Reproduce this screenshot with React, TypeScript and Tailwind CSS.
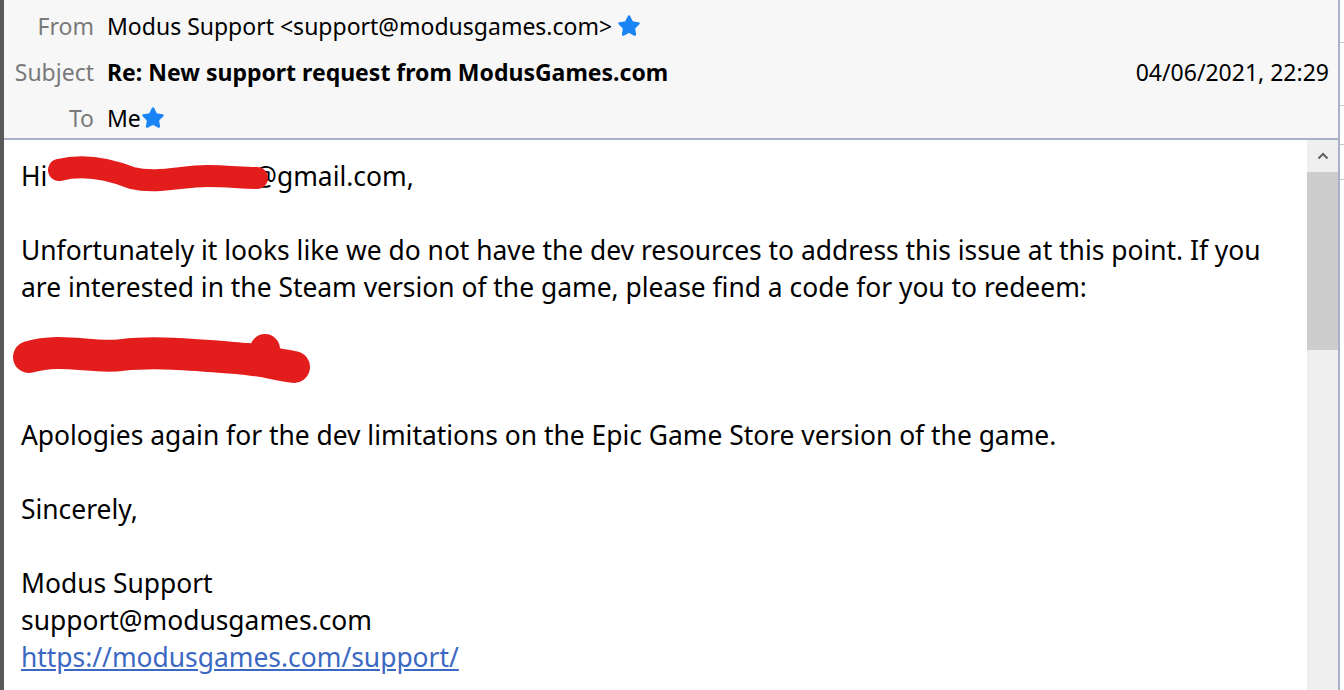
import { Star } from "lucide-react";

const font = { fontFamily: '"Noto Sans", "Open Sans", sans-serif' };

function BlueStar() {
  return <Star size={24} className="shrink-0 text-[#1b84f5]" fill="#1b84f5" strokeWidth={1.5} />;
}

function HeaderRow({ label, children }: { label: string; children: React.ReactNode }) {
  return (
    <div className="flex items-center h-[46px]">
      <div className="w-[90px] text-right text-[#7a7a7a]">{label}</div>
      <div className="flex-1 flex items-center pl-[13px] text-black">{children}</div>
    </div>
  );
}

function Scrollbar() {
  return (
    <div className="w-[31px] flex flex-col bg-[#efefef]">
      <div className="h-[32px] flex items-center justify-center">
        <svg width="12" height="8" viewBox="0 0 12 8">
          <path d="M1.5 6.5 L6 2 L10.5 6.5" stroke="#5f5f5f" strokeWidth="2" fill="none" />
        </svg>
      </div>
      <div className="h-[178px] bg-[#cdcdcd]" />
      <div className="flex-1" />
    </div>
  );
}

export default function App() {
  return (
    <div className="w-[1344px] h-[690px] overflow-hidden flex bg-white" style={font}>
      <div className="w-[4px] bg-[#595959]" />
      <div className="w-[1334px] flex flex-col">
        <header className="h-[140px] bg-[#f7f7f7] border-b-2 border-[#a9b1c5] pt-[3px] text-[23px]">
          <HeaderRow label="From">
            <span>Modus Support &lt;support@modusgames.com&gt;</span>
            <span className="ml-[5px]"><BlueStar /></span>
          </HeaderRow>
          <HeaderRow label="Subject">
            <span className="font-bold flex-1">Re: New support request from ModusGames.com</span>
            <span className="pr-[9px]">04/06/2021, 22:29</span>
          </HeaderRow>
          <HeaderRow label="To">
            <span>Me</span>
            <BlueStar />
          </HeaderRow>
        </header>
        <div className="flex flex-1 min-h-0">
          <main className="flex-1 pl-[17px] pt-[18px] text-[26.4px] leading-[37px] text-black">
            <div className="relative">
              Hi <span className="inline-block w-[199px]" />@gmail.com,
              <svg className="absolute left-[16px] -top-[4px]" width="250" height="46" viewBox="0 0 250 46">
                <path
                  d="M22 16 C45 10 70 14 95 24 C120 30 145 22 170 22 C190 22 205 24 220 24"
                  stroke="#e31c1c"
                  strokeWidth="22"
                  strokeLinecap="round"
                  fill="none"
                />
              </svg>
            </div>
            <div>&nbsp;</div>
            <div className="whitespace-nowrap">
              Unfortunately it looks like we do not have the dev resources to address this issue at this point. If you
            </div>
            <div className="whitespace-nowrap">
              are interested in the Steam version of the game, please find a code for you to redeem:
            </div>
            <div>&nbsp;</div>
            <div className="relative h-[37px]">
              <svg className="absolute -left-[14px] -top-[14px]" width="310" height="60" viewBox="0 0 310 60">
                <path
                  d="M22 28 C55 18 85 30 115 26 C150 22 190 26 240 30 C258 32 272 36 287 38"
                  stroke="#e31c1c"
                  strokeWidth="32"
                  strokeLinecap="round"
                  fill="none"
                />
                <circle cx="258" cy="20" r="15" fill="#e31c1c" />
              </svg>
            </div>
            <div>&nbsp;</div>
            <div>Apologies again for the dev limitations on the Epic Game Store version of the game.</div>
            <div>&nbsp;</div>
            <div>Sincerely,</div>
            <div>&nbsp;</div>
            <div>Modus Support</div>
            <div>support@modusgames.com</div>
            <a href="#" className="text-[#3b68c2] underline">https://modusgames.com/support/</a>
          </main>
          <Scrollbar />
        </div>
      </div>
      <div className="w-[2px] bg-[#a9b1c5]" />
      <div className="flex-1 bg-white flex flex-col">
        <div className="h-[42px]" />
        <div className="h-px bg-[#c5c5c5]" />
        <div className="h-[62px]" />
        <div className="h-px bg-[#c5c5c5]" />
        <div className="h-[38px]" />
        <div className="h-px bg-[#c5c5c5]" />
        <div className="h-[34px]" />
        <div className="h-px bg-[#c5c5c5]" />
      </div>
    </div>
  );
}
